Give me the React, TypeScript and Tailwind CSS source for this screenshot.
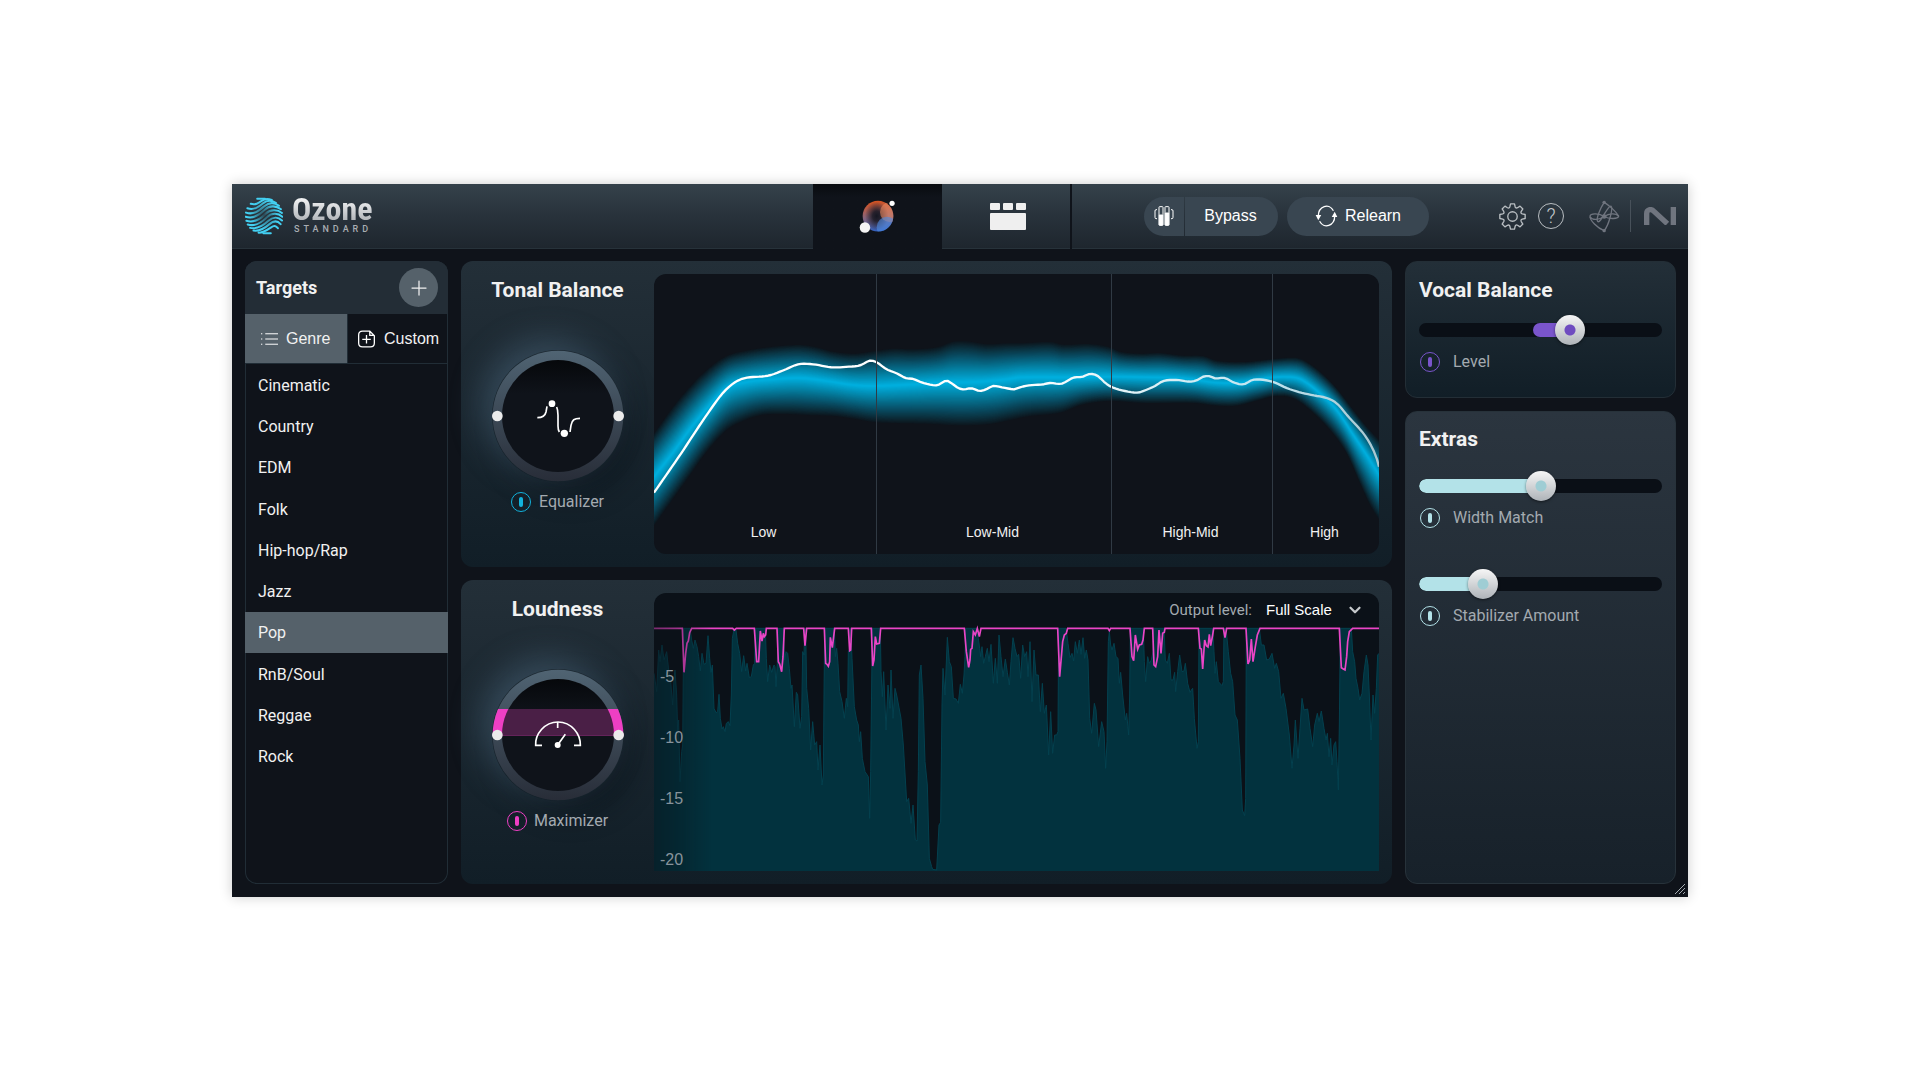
import { useState, type ReactNode } from 'react';
import { ChevronDown, Plus } from 'lucide-react';

type Point = [number, number];

const GENRES = ['Cinematic', 'Country', 'EDM', 'Folk', 'Hip-hop/Rap', 'Jazz', 'Pop', 'RnB/Soul', 'Reggae', 'Rock'];

const parse = (data: string, dx = 0): Point[] =>
  data.trim().split(/\s+/).map(pair => {
    const [x, y] = pair.split(',').map(Number);
    return [x + dx, y];
  });

// each trace is stored in two halves, the second one starts at x = 1110
const HALF = 1110;
const join = (left: string, right: string) => [...parse(left), ...parse(right, HALF)];

const BAND_TOP = join(
  '42,521 100,440 150,380 200,330 260,288 320,272 400,260 480,255 530,262 580,275 640,281 700,274 760,266 820,268 890,262 940,245 990,245 1040,253 1100,250',
  '30,250 120,246 160,254 240,252 300,262 330,275 390,281 450,279 520,287 580,288 620,302 700,306 790,297 850,293 880,300 930,335 980,385 1030,450 1070,500 1107,540',
);
const BAND_MID = join(
  '42,650 100,576 150,507 200,446 260,384 320,366 400,358 480,354 560,363 640,375 700,378 800,374 900,368 1000,366 1100,358',
  '30,352 200,352 300,350 420,352 520,355 620,368 690,368 740,360 790,352 850,352 880,362 930,400 980,450 1030,525 1070,585 1107,645',
);
const BAND_BOTTOM = join(
  '42,796 100,715 150,645 200,575 260,510 320,478 370,464 440,462 500,465 580,468 640,476 700,486 760,489 860,491 960,496 1050,492',
  '0,480 60,468 150,458 220,433 300,423 400,429 550,429 620,437 680,437 740,422 800,408 850,415 900,450 960,510 1010,580 1050,670 1080,735 1107,778',
);
const TONE_LINE = join(
  '42,698 120,585 200,465 255,392 305,357 385,347 430,331 475,313 520,313 575,322 625,320 660,316 690,302 710,307 740,328 770,340 797,354 820,357 850,369 890,376 905,369 920,362 935,370 955,384 970,388 995,385 1020,393 1040,387 1060,378 1090,383',
  '10,388 15,387 50,377 100,373 120,369 155,371 190,353 215,351 240,342 262,347 285,368 305,381 345,393 383,398 400,393 435,378 460,363 500,360 540,365 560,361 580,350 600,349 615,355 645,354 670,367 700,373 730,359 770,361 800,370 830,384 870,397 910,406 950,414 980,430 1015,470 1060,520 1085,560 1100,595 1107,620',
);

const OUTPUT_WAVE = join(
  '42,265 50,320 56,195 60,230 66,180 72,225 80,200 86,255 92,290 98,360 102,280 105,255 110,330 113,440 116,405 120,590 125,500 128,480 131,130 150,130 155,165 160,190 165,165 171,185 176,215 181,258 186,205 192,238 198,235 204,152 209,220 213,262 217,240 222,370 228,383 233,380 237,328 241,400 246,432 250,425 255,440 259,415 265,410 270,422 274,330 277,160 282,133 288,135 293,175 299,205 305,260 311,212 317,258 321,235 328,278 334,275 340,240 344,235 346,130 376,130 379,220 383,290 389,240 395,262 402,240 405,245 408,305 412,235 414,130 430,130 434,225 438,200 443,205 448,250 453,310 456,300 463,425 469,322 473,330 480,430 485,395 488,200 492,210 494,130 497,130 500,310 506,370 512,495 518,410 524,480 530,470 534,555 540,480 546,600 550,570 552,330 554,130 583,130 586,215 590,190 594,235 599,320 606,350 613,400 619,340 623,365 625,200 628,195 630,130 632,130 636,220 643,365 650,405 655,420 658,470 662,440 667,520 675,560 685,575 689,700 692,560 695,300 697,130 721,130 723,260 727,335 731,260 738,435 744,300 750,370 753,255 759,400 765,310 770,330 783,400 790,480 800,650 806,640 813,715 819,660 826,765 831,768 835,560 838,270 843,240 849,340 855,530 862,600 868,820 875,845 878,853 890,855 897,720 902,712 906,360 909,250 915,330 922,157 928,230 934,245 940,340 948,342 955,355 961,298 967,325 972,270 975,215 977,130 1012,130 1015,160 1019,190 1022,215 1026,185 1031,235 1036,215 1042,190 1047,230 1053,178 1060,295 1066,220 1072,295 1077,150 1083,215 1089,275 1096,222 1102,262 1108,300',
  '3,230 9,158 15,190 21,215 26,208 32,280 38,180 44,215 50,200 54,275 60,170 66,350 72,195 78,270 85,270 91,380 97,295 103,385 109,360 116,510 122,380 128,505 134,450 140,450 144,440 146,130 168,130 174,175 180,218 186,205 191,228 196,170 202,205 208,165 213,208 219,158 224,220 229,195 234,225 239,400 245,445 253,355 258,375 266,485 275,410 282,440 287,550 291,470 295,170 298,140 302,180 306,195 312,175 318,215 324,220 328,295 332,262 338,330 346,405 350,385 356,450 359,330 361,130 400,130 403,230 407,290 413,215 418,235 424,225 429,200 431,130 462,130 466,225 472,235 478,205 483,285 489,285 494,262 497,320 503,260 509,210 516,260 522,258 526,235 533,295 540,322 544,315 548,310 553,400 561,490 565,470 567,130 608,130 612,200 615,265 619,230 625,290 636,302 640,290 642,130 648,130 655,200 662,265 668,290 675,390 682,405 690,520 697,675 704,692 707,640 709,130 748,130 754,180 762,180 770,225 778,222 786,205 794,250 799,235 806,260 813,340 820,325 828,370 838,450 846,550 852,480 856,405 864,520 870,430 876,340 882,375 893,372 900,430 908,485 914,420 922,385 927,410 934,378 942,430 948,465 952,445 957,515 962,460 966,540 972,480 977,470 981,530 985,615 988,420 991,130 1024,130 1028,200 1034,230 1038,280 1044,310 1049,345 1056,325 1062,260 1069,210 1074,240 1078,330 1083,465 1089,330 1094,385 1099,310 1103,210 1107,205',
);
const GAIN_REDUCTION = join(
  '42,130 127,130 132,262 137,205 141,175 145,168 149,143 155,130 278,130 283,135 289,130 343,130 350,230 356,230 361,138 366,168 370,145 373,155 377,150 379,130 411,130 415,230 419,237 425,260 429,215 433,130 491,130 495,182 500,130 553,130 557,235 561,238 565,244 569,230 571,157 577,188 584,130 625,130 629,197 632,195 635,130 694,130 698,243 702,225 706,155 710,177 718,175 722,130 973,130 979,200 986,247 990,225 992,193 996,190 1000,140 1006,150 1012,130 1018,155 1023,130',
  '143,130 149,275 158,170 163,150 169,145 173,130 294,130 298,137 302,130 360,130 366,215 371,227 376,150 383,193 388,180 395,178 399,165 403,130 428,130 432,240 437,245 443,215 447,135 453,205 458,145 463,142 465,130 565,130 570,190 574,192 578,252 584,165 589,182 594,186 598,148 602,182 608,150 611,130 640,130 645,158 650,130 708,130 714,237 719,225 724,162 729,230 736,185 742,150 750,130 988,130 994,248 1000,252 1005,255 1010,215 1013,170 1018,140 1028,130 1107,130',
);

// Hermite interpolation through the points
function sample(points: Point[], x: number) {
  let i = points.findIndex(p => p[0] >= x);
  if (i === -1) return points[points.length - 1][1];
  if (i === 0) i = 1;
  const p1 = points[i - 1];
  const p2 = points[i];
  const p0 = points[i - 2] ?? p1;
  const p3 = points[i + 1] ?? p2;
  const w = p2[0] - p1[0];
  const t = Math.max(0, (x - p1[0]) / w);
  const m1 = ((p2[1] - p0[1]) / (p2[0] - p0[0])) * w;
  const m2 = ((p3[1] - p1[1]) / (p3[0] - p1[0])) * w;
  const t2 = t * t;
  const t3 = t2 * t;
  return (2 * t3 - 3 * t2 + 1) * p1[1] + (t3 - 2 * t2 + t) * m1 + (3 * t2 - 2 * t3) * p2[1] + (t3 - t2) * m2;
}

const XS = Array.from({ length: 243 }, (_, i) => Math.min(42 + i * 9, 2217));
const BAND = XS.map(x => ({ x, top: sample(BAND_TOP, x), mid: sample(BAND_MID, x), bottom: sample(BAND_BOTTOM, x) }));
const LAYERS = Array.from({ length: 40 }, (_, i) => i / 39);

const bandPolygon = (t: number) => {
  const upper = BAND.map(b => `${b.x},${(b.top + (b.mid - b.top) * t).toFixed(1)}`);
  const lower = BAND.map(b => `${b.x},${(b.bottom + (b.mid - b.bottom) * t).toFixed(1)}`).reverse();
  return [...upper, ...lower].join(' ');
};

const mix = (from: number, to: number, t: number) => Math.round(from + (to - from) * t);
const bandColor = (t: number) => `rgb(${mix(13, 0, t)}, ${mix(24, 178, t)}, ${mix(32, 226, t)})`;
const toPoints = (points: Point[]) => points.map(p => p.join(',')).join(' ');
const TONE_POINTS = XS.map(x => `${x},${sample(TONE_LINE, x).toFixed(1)}`).join(' ');

function OzoneMark() {
  const waves = [
    'M36 5 H59',
    'M17 20 C32 24 40 18 50 11 S68 5 79 9',
    'M7 33 C28 40 42 28 54 18 S78 9 91 17',
    'M3 46 C26 54 42 40 56 28 S86 15 100 26',
    'M2 58 C26 66 44 52 58 38 S92 25 106 36',
    'M4 70 C28 78 46 64 60 50 S96 36 109 47',
    'M8 81 C30 88 50 74 64 60 S98 47 110 58',
    'M15 91 C36 96 54 84 68 71 S98 58 109 69',
    'M25 99 C44 102 58 92 72 80 S96 70 105 80',
    'M40 105 C54 106 64 98 76 90 S90 86 97 92',
    'M54 107 H76',
  ];
  return (
    <svg viewBox="0 0 112 112" className="size-[38px]" aria-hidden="true">
      <defs>
        <radialGradient id="ozone-fade" cx="0.5" cy="0.47" r="0.5">
          <stop offset="0" stopColor="#fff" stopOpacity="0.15" />
          <stop offset="0.4" stopColor="#fff" stopOpacity="0.6" />
          <stop offset="0.75" stopColor="#fff" />
        </radialGradient>
        <mask id="ozone-mask">
          <rect width="112" height="112" fill="url(#ozone-fade)" />
        </mask>
      </defs>
      <g mask="url(#ozone-mask)" fill="none" strokeLinecap="round" strokeWidth="6" stroke="#43d0f2">
        {waves.map(d => <path key={d} d={d} />)}
      </g>
    </svg>
  );
}

function OrbIcon() {
  return (
    <svg viewBox="0 0 112 104" className="h-[34px] w-[38px]" aria-hidden="true">
      <defs>
        <linearGradient id="orb-fill" x1="0.45" y1="0" x2="0.55" y2="1">
          <stop offset="0" stopColor="#d9521d" />
          <stop offset="0.5" stopColor="#8a6478" />
          <stop offset="1" stopColor="#2f5fc0" />
        </linearGradient>
        <radialGradient id="orb-core">
          <stop offset="0" stopColor="#151722" />
          <stop offset="0.35" stopColor="#1b1a26" stopOpacity="0.9" />
          <stop offset="1" stopColor="#1b1a26" stopOpacity="0" />
        </radialGradient>
        <clipPath id="orb-clip"><circle cx="56" cy="49" r="47" /></clipPath>
      </defs>
      <circle cx="56" cy="49" r="47" fill="url(#orb-fill)" />
      <g clipPath="url(#orb-clip)">
        <ellipse cx="52" cy="49" rx="36" ry="44" fill="url(#orb-core)" />
        <circle cx="93" cy="37" r="31" fill="#f08a5c" opacity="0.55" />
        <circle cx="84" cy="83" r="32" fill="#4f8be0" opacity="0.6" />
      </g>
      <circle cx="16" cy="84" r="16" fill="#f4f4f4" />
      <circle cx="99" cy="10" r="8" fill="#fff" />
    </svg>
  );
}

function ModulesIcon() {
  return (
    <svg viewBox="0 0 36 27" className="h-[27px] w-[36px] fill-[#efefef]" aria-hidden="true">
      <rect width="10" height="7" rx="1" />
      <rect x="13" width="10" height="7" rx="1" />
      <rect x="26" width="10" height="7" rx="1" />
      <rect y="10" width="36" height="17" rx="1" />
    </svg>
  );
}

function GainMatchIcon() {
  return (
    <svg viewBox="0 0 60 60" className="size-[20px]" fill="none" stroke="#fff" strokeWidth="3" aria-hidden="true">
      <path d="M9 11 H6 Q3 11 3 15 V34 Q3 38 6 38 H9 M51 11 H54 Q57 11 57 15 V34 Q57 38 54 38 H51" />
      <rect x="15" y="2" width="12" height="56" rx="2" />
      <rect x="33" y="2" width="12" height="56" rx="2" />
      <path d="M16 27 H26 V57 H16 Z M34 21 H44 V57 H34 Z" fill="#fff" />
    </svg>
  );
}

function RelearnIcon() {
  return (
    <svg viewBox="0 0 70 66" className="h-[22px] w-[23px]" fill="none" stroke="#fff" strokeWidth="4" aria-hidden="true">
      <path d="M10 33 A25 30 0 0 1 56 17 M60 33 A25 30 0 0 1 14 49" />
      <path d="M2 30 H19 L10 46 Z M51 36 H68 L60 20 Z" fill="#fff" stroke="none" />
    </svg>
  );
}

function GearIcon() {
  const teeth = Array.from({ length: 8 }, (_, i) => {
    const at = (r: number, deg: number) => {
      const a = ((i * 45 + deg) * Math.PI) / 180;
      return `${(40 + r * Math.cos(a)).toFixed(1)} ${(40 + r * Math.sin(a)).toFixed(1)}`;
    };
    return `${i ? 'L' : 'M'}${at(30, -15)} L${at(38, -9)} L${at(38, 9)} L${at(30, 15)} Q${at(25, 22)} ${at(30, 30)}`;
  });
  return (
    <svg viewBox="0 0 80 80" className="size-[27px]" fill="none" stroke="#b9bec2" strokeWidth="4" strokeLinejoin="round" aria-hidden="true">
      <path d={`${teeth.join(' ')} Z`} />
      <circle cx="40" cy="40" r="14" />
    </svg>
  );
}

function IzotopeMark() {
  return (
    <svg viewBox="22 24 98 98" className="size-[33px]" fill="none" stroke="#70757f" strokeWidth="4" aria-hidden="true">
      <path d="M70 31 C60 46 44 82 51 88 C60 94 80 40 90 42 C98 46 84 98 70 115" />
      <path d="M70 73 C56 64 30 62 28 72 C27 84 50 108 70 115" />
      <path d="M28 74 C36 86 56 82 70 73 S104 62 113 72" />
      <path d="M70 31 C82 38 104 56 113 72 C112 80 86 82 70 73" />
      <g fill="#70757f" stroke="none">
        <circle cx="70" cy="31" r="5" />
        <circle cx="70" cy="73" r="7" />
        <circle cx="70" cy="115" r="5" />
      </g>
    </svg>
  );
}

function NativeMark() {
  return (
    <svg viewBox="0 0 96 54" className="h-[18px] w-[32px]" fill="none" stroke="#70757f" aria-hidden="true">
      <path d="M8 54 V20 C8 7 21 4 30 13 L70 50" strokeWidth="16" />
      <path d="M88 0 V54" strokeWidth="16" />
    </svg>
  );
}

function Header() {
  return (
    <header className="flex h-[65px] bg-[#0f131a]">
      <div className="flex flex-1 items-center gap-[9px] border-b border-[#27323a] bg-linear-to-b from-[#35424b] via-[#28323b] to-[#1e262e] pl-[13px]">
        <OzoneMark />
        <div className="flex flex-col pb-[4px]">
          <span className="bg-linear-to-b from-white to-[#a9adb2] bg-clip-text font-['Liberation_Sans_Narrow','Roboto_Condensed',Roboto,sans-serif] text-[32px] leading-[30px] font-bold text-transparent">
            Ozone
          </span>
          <span className="pl-[2px] text-[9px] leading-[10px] font-medium tracking-[4px] text-[#a9aeb3]">STANDARD</span>
        </div>
      </div>
      <nav className="flex" aria-label="Views">
        <button aria-label="Assistant view" aria-current="page" className="flex w-[129px] items-center justify-center bg-linear-to-b from-[#080b0f] to-[#0f131a] to-20%">
          <OrbIcon />
        </button>
        <button aria-label="Modules view" className="flex w-[128px] items-center justify-center border-b border-[#27323a] bg-linear-to-b from-[#35424b] via-[#28323b] to-[#1e262e] pl-[4px]">
          <ModulesIcon />
        </button>
      </nav>
      <div className="ml-[2px] flex w-[616px] items-center border-b border-[#27323a] bg-linear-to-b from-[#35424b] via-[#28323b] to-[#1e262e] pr-[12px] font-['Liberation_Sans',Arial,sans-serif] text-[16px] text-white">
        <div className="ml-[72px] flex h-[39px] w-[134px] overflow-hidden rounded-full">
          <button aria-label="Gain match" className="flex w-[40px] items-center justify-center bg-[#394651]">
            <GainMatchIcon />
          </button>
          <button className="ml-[1px] flex-1 bg-[#394651] pr-[2px]">Bypass</button>
        </div>
        <button className="ml-[9px] flex h-[39px] w-[142px] items-center justify-center gap-[7px] rounded-full bg-[#394651]">
          <RelearnIcon />
          Relearn
        </button>
        <div className="ml-auto flex items-center">
          <button aria-label="Settings">
            <GearIcon />
          </button>
          <button aria-label="Help" className="ml-[12px] flex size-[26px] items-center justify-center rounded-full border border-[#b9bec2] font-[Roboto,sans-serif] text-[20px] leading-none font-light text-[#c4c8cb]">
            ?
          </button>
          <a href="#izotope" aria-label="iZotope" className="ml-[24px]">
            <IzotopeMark />
          </a>
          <span className="mx-[9px] h-[32px] w-px bg-[#48515a]" />
          <a href="#native" aria-label="Native Instruments" className="ml-[4px]">
            <NativeMark />
          </a>
        </div>
      </div>
    </header>
  );
}

function Targets() {
  const [selected, setSelected] = useState('Pop');
  return (
    <aside className="flex w-[203px] flex-col overflow-hidden rounded-[12px] bg-[#0f131a] shadow-[inset_0_0_0_1px_#212d36]">
      <div className="flex h-[53px] items-center justify-between bg-[#232d36] pr-[10px] pl-[11px]">
        <h2 className="text-[18px] font-bold">Targets</h2>
        <button aria-label="Add target" className="flex size-[39px] items-center justify-center rounded-full bg-[#55616a]">
          <Plus className="size-[24px]" strokeWidth={1.25} />
        </button>
      </div>
      <div className="flex h-[50px] border-b border-[#212d36] font-['Liberation_Sans',Arial,sans-serif] text-[16px]">
        <button className="flex w-[102px] items-center gap-[8px] bg-[#55616a] pl-[16px]">
          <svg viewBox="0 0 52 40" className="h-[14px] w-[17px]" stroke="#fff" strokeWidth="3" aria-hidden="true">
            <path d="M0 4 H4 M13 4 H52 M0 20 H4 M13 20 H52 M0 36 H4 M13 36 H52" />
          </svg>
          Genre
        </button>
        <button className="flex flex-1 items-center gap-[9px] border-l border-[#212d36] pl-[10px]">
          <svg viewBox="0 0 52 54" className="h-[18px] w-[17px]" fill="none" stroke="#fff" strokeWidth="4" aria-hidden="true">
            <path d="M36 3 H14 Q2 3 2 15 V39 Q2 51 14 51 H38 Q50 51 50 39 V17 Z M36 3 V16 H50" />
            <path d="M26 15 V41 M13 28 H39" />
          </svg>
          Custom
        </button>
      </div>
      <ul className="grid h-[413px] grid-rows-10">
        {GENRES.map(genre => (
          <li key={genre} className="flex">
            <button
              onClick={() => setSelected(genre)}
              className={genre === selected ? 'flex-1 bg-[#55616a] pt-[2px] pl-[13px] text-left' : 'flex-1 pt-[2px] pl-[13px] text-left'}
            >
              {genre}
            </button>
          </li>
        ))}
      </ul>
    </aside>
  );
}

const POWER = {
  cyan: 'border-[#12b2dc] before:bg-[#12b2dc]',
  pink: 'border-[#ee3fc4] before:bg-[#ee3fc4]',
  purple: 'border-[#7a55cc] before:bg-[#7a55cc]',
  ice: 'border-[#b3e2e8] before:bg-[#b3e2e8]',
};

function Power({ label, tone, className }: { label: string; tone: keyof typeof POWER; className?: string }) {
  return (
    <label className={`flex items-center text-[#a3aab0] ${className}`}>
      <input
        type="checkbox"
        defaultChecked
        className={`flex size-[20px] shrink-0 appearance-none items-center justify-center rounded-full border before:h-[10px] before:w-[4px] before:rounded-[2px] ${POWER[tone]}`}
      />
      {label}
    </label>
  );
}

function Knob({ id, active, children }: { id: string; active?: boolean; children: ReactNode }) {
  return (
    <div className="size-[132px] rounded-full shadow-[-10px_-10px_32px_rgba(84,116,140,0.45),12px_12px_28px_rgba(6,14,20,0.45)]">
      <svg viewBox="109 284 396 396" className="size-full" aria-hidden="true">
        <defs>
          <linearGradient id={`${id}-ring`} x1="0" y1="0" x2="0" y2="1">
            <stop offset="0" stopColor="#506473" />
            <stop offset="1" stopColor="#282d38" />
          </linearGradient>
          <linearGradient id={`${id}-face`} x1="0" y1="0" x2="0" y2="1">
            <stop offset="0" stopColor="#06080b" />
            <stop offset="0.3" stopColor="#0f131a" />
          </linearGradient>
          <clipPath id={`${id}-range`}><rect x="109" y="404" width="396" height="80" /></clipPath>
        </defs>
        <circle cx="307" cy="482" r="196" fill={`url(#${id}-ring)`} />
        <circle cx="307" cy="482" r="168" fill={`url(#${id}-face)`} />
        {active && (
          <g clipPath={`url(#${id}-range)`}>
            <circle cx="307" cy="482" r="196" fill="#ee3fc4" />
            <circle cx="307" cy="482" r="168" fill="#4a1f46" />
          </g>
        )}
        {children}
        <circle cx="125" cy="482" r="16" fill="#ebebeb" />
        <circle cx="489" cy="482" r="16" fill="#ebebeb" />
      </svg>
    </div>
  );
}

function ModulePanel({ title, knob, power, children }: { title: string; knob: ReactNode; power: ReactNode; children: ReactNode }) {
  return (
    <section className="flex flex-1 rounded-[12px] bg-linear-to-b from-[#232f38] to-[#111e27] py-[13px] pr-[13px]">
      <div className="flex w-[193px] flex-col items-center">
        <h2 className="pt-[4px] text-[21px] leading-[24px] font-bold">{title}</h2>
        <div className="pt-[48px]">{knob}</div>
        {power}
      </div>
      {children}
    </section>
  );
}

function TonalBalance() {
  return (
    <ModulePanel
      title="Tonal Balance"
      power={<Power label="Equalizer" tone="cyan" className="mt-[8px] gap-[8px]" />}
      knob={
        <Knob id="eq">
          <g fill="none" stroke="#fff" strokeWidth="5">
            <path d="M245 487 C260 487 268 483 271 470 L274 453" />
            <path d="M303 455 Q307 463 307 480 V512 Q307 524 311 530" />
            <path d="M343 530 L346 510 C349 493 356 489 373 489" />
          </g>
          <circle cx="289" cy="445" r="10" fill="#fff" />
          <circle cx="326" cy="534" r="11" fill="#fff" />
        </Knob>
      }
    >
      <div className="relative h-[280px] flex-1 overflow-hidden rounded-[12px] bg-[#0f131a]">
        <svg viewBox="42 42 2175 840" preserveAspectRatio="none" className="size-full" role="img" aria-label="Tonal balance curve">
          <defs>
            <linearGradient id="tone-line" x1="0" y1="0" x2="1" y2="0">
              <stop offset="0.5" stopColor="#fff" />
              <stop offset="0.85" stopColor="#bfe4ef" />
              <stop offset="1" stopColor="#a9c6cf" />
            </linearGradient>
          </defs>
          {LAYERS.map(t => <polygon key={t} points={bandPolygon(t)} fill={bandColor(t)} />)}
          <polyline points={TONE_POINTS} fill="none" stroke="url(#tone-line)" strokeWidth="7" strokeLinejoin="round" />
        </svg>
        <div className="absolute inset-0 grid grid-cols-[223fr_235fr_161fr_106fr] items-stretch text-center font-['Liberation_Sans',Arial,sans-serif] text-[14px] leading-[16px]">
          {['Low', 'Low-Mid', 'High-Mid', 'High'].map(band => (
            <span key={band} className="flex items-end justify-center border-r border-[#303a44] pr-[3px] pb-[14px] last:border-0">
              {band}
            </span>
          ))}
        </div>
      </div>
    </ModulePanel>
  );
}

function Loudness() {
  return (
    <ModulePanel
      title="Loudness"
      power={<Power label="Maximizer" tone="pink" className="mt-[8px] gap-[7px]" />}
      knob={
        <Knob id="max" active>
          <g fill="none" stroke="#fff" strokeWidth="5">
            <path d="M259 513 H240 C238 480 266 443 307 443 S375 480 374 513 H355" />
            <path d="M306 443 V461 M306 512 L329 480" />
          </g>
          <circle cx="306" cy="512" r="9" fill="#fff" />
        </Knob>
      }
    >
      <div className="relative h-[278px] flex-1 overflow-hidden rounded-t-[12px] bg-[#0b1118]">
        <svg viewBox="42 24 2175 834" preserveAspectRatio="none" className="size-full" role="img" aria-label="Loudness history">
          <defs>
            <linearGradient id="history-fade" x1="0" y1="0" x2="1" y2="0">
              <stop offset="0" stopColor="#fff" stopOpacity="0.5" />
              <stop offset="0.03" stopColor="#fff" stopOpacity="0.65" />
              <stop offset="0.08" stopColor="#fff" />
            </linearGradient>
            <mask id="history-mask" maskUnits="userSpaceOnUse" x="42" y="24" width="2175" height="834">
              <rect x="42" y="24" width="2175" height="834" fill="url(#history-fade)" />
            </mask>
          </defs>
          <g mask="url(#history-mask)">
            <polygon points={`30,870 30,265 ${toPoints(OUTPUT_WAVE)} 2230,205 2230,870`} fill="#02323e" stroke="#04414f" strokeWidth="3" />
            <polyline points={toPoints(GAIN_REDUCTION)} fill="none" stroke="#ea45c6" strokeWidth="5" />
          </g>
        </svg>
        <div className="absolute inset-x-0 top-0 flex h-[34px] items-center justify-end pr-[15px] text-[15px]">
          <label htmlFor="output-level" className="text-[#a3aab0]">Output level:</label>
          <select
            id="output-level"
            className="ml-[14px] w-[80px] appearance-none bg-transparent font-['Liberation_Sans',Arial,sans-serif] text-white"
          >
            <option>Full Scale</option>
          </select>
          <ChevronDown className="size-[18px] text-[#c4c8cb]" strokeWidth={3} />
        </div>
        <div className="absolute top-[76px] left-[6px] flex flex-col gap-[45px] font-['Liberation_Sans',Arial,sans-serif] text-[16px] leading-[16px] text-[#87939b]">
          {[-5, -10, -15, -20].map(db => <span key={db}>{db}</span>)}
        </div>
      </div>
    </ModulePanel>
  );
}

const SLIDER = {
  purple: {
    fill: 'bg-[#7a55cc]',
    thumb: '[&::-webkit-slider-thumb]:bg-[radial-gradient(circle,#6f4cc0_5px,transparent_6px),linear-gradient(#f6f6f6,#aeb3b8)]',
  },
  ice: {
    fill: 'bg-[#b3e2e8]',
    thumb: '[&::-webkit-slider-thumb]:bg-[radial-gradient(circle,#9fcdd4_5px,transparent_6px),linear-gradient(#f6f6f6,#aeb3b8)]',
  },
};

interface SliderProps {
  label: string;
  tone: keyof typeof SLIDER;
  initial: number;
  origin?: number;
}

function Slider({ label, tone, initial, origin = 0 }: SliderProps) {
  const [value, setValue] = useState(initial);
  return (
    <div className="flex flex-col gap-[5px]">
      <div className="relative flex h-[30px] items-center">
        <div className="h-[14px] w-full overflow-hidden rounded-full bg-[#0a0f16]">
          <div
            className={`h-full rounded-full ${SLIDER[tone].fill}`}
            style={{ marginLeft: `${origin}%`, width: `${Math.max(value - origin + 3, 0)}%` }}
          />
        </div>
        <input
          type="range"
          aria-label={label}
          value={value}
          onChange={e => setValue(Number(e.target.value))}
          className={`absolute inset-0 w-full appearance-none bg-transparent [&::-webkit-slider-thumb]:size-[30px] [&::-webkit-slider-thumb]:appearance-none [&::-webkit-slider-thumb]:rounded-full [&::-webkit-slider-thumb]:shadow-[0_1px_3px_rgba(0,0,0,0.5)] ${SLIDER[tone].thumb}`}
        />
      </div>
      <Power label={label} tone={tone} className="gap-[13px] pl-[1px]" />
    </div>
  );
}

export default function App() {
  return (
    <div className="min-h-screen bg-white px-4 py-[184px] font-[Roboto,'Noto_Sans',sans-serif] text-[16px] text-[#f1f1f1] xl:px-[232px]">
      <main className="relative bg-[#0f131a] shadow-[0_0_12px_rgba(0,0,0,0.2)]">
        <Header />
        <div className="flex gap-[13px] pt-[12px] pr-[12px] pb-[13px] pl-[13px]">
          <Targets />
          <div className="flex min-w-0 flex-1 flex-col gap-[13px]">
            <TonalBalance />
            <Loudness />
          </div>
          <div className="flex w-[271px] flex-col gap-[13px]">
            <section className="h-[137px] rounded-[12px] border border-[#232e36] bg-linear-to-b from-[#232f38] to-[#111e27] px-[13px] pt-[16px]">
              <h2 className="mb-[13px] text-[21px] leading-[24px] font-bold">Vocal Balance</h2>
              <Slider label="Level" tone="purple" initial={64} origin={47} />
            </section>
            <section className="flex flex-1 flex-col rounded-[12px] border border-[#27323a] bg-linear-to-b from-[#2b353f] to-[#17212a] px-[13px] pt-[15px]">
              <h2 className="mb-[20px] text-[21px] leading-[24px] font-bold">Extras</h2>
              <div className="flex flex-col gap-[39px]">
                <Slider label="Width Match" tone="ice" initial={50} />
                <Slider label="Stabilizer Amount" tone="ice" initial={23} />
              </div>
            </section>
          </div>
        </div>
        <svg viewBox="0 0 12 12" className="absolute right-[2px] bottom-[2px] size-[12px]" stroke="#a3aab0" aria-hidden="true">
          <path d="M1 11 L11 1 M5 11 L11 5 M9 11 L11 9" />
        </svg>
      </main>
    </div>
  );
}
